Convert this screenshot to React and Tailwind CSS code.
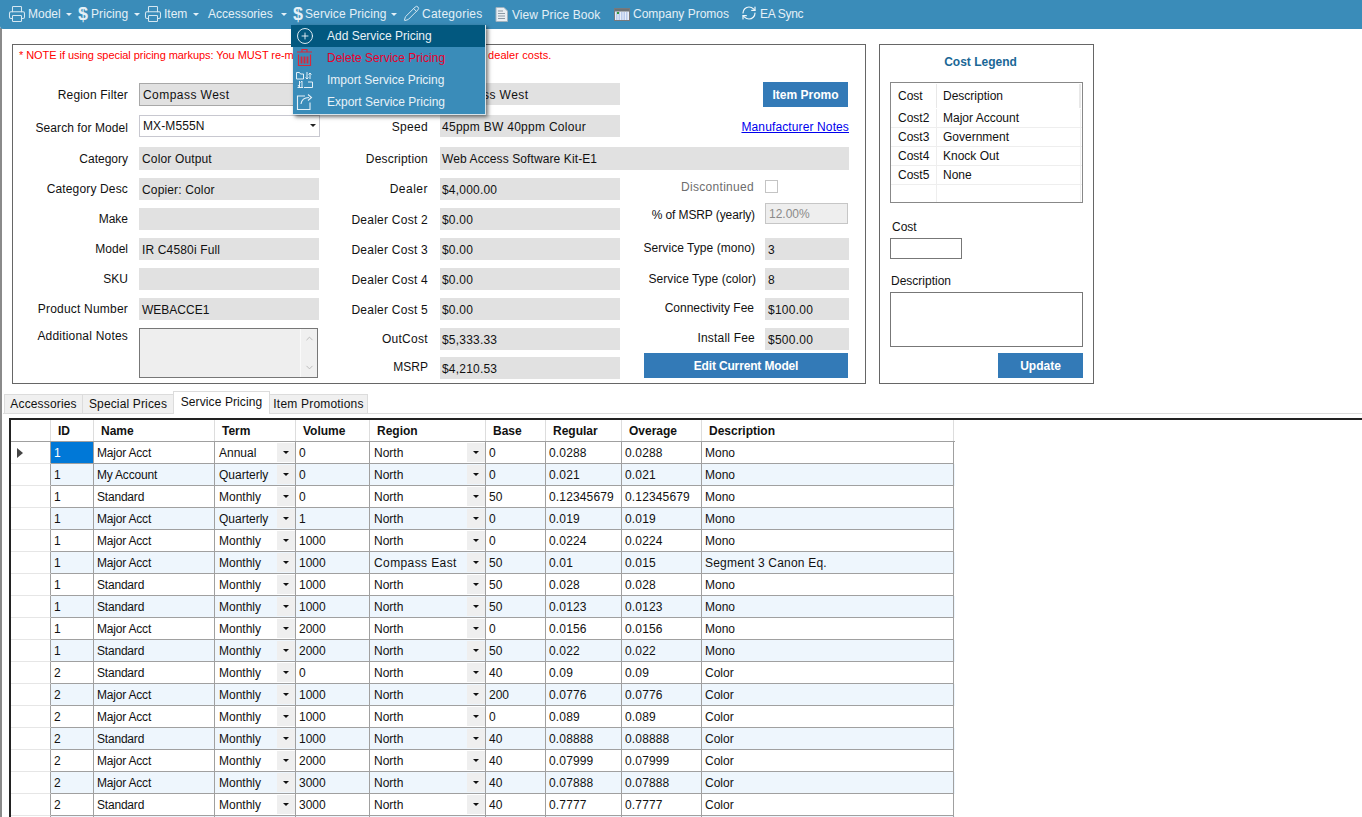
import React from "react";
import { Printer, Pencil, RefreshCw, CirclePlus, ChevronUp, ChevronDown } from "lucide-react";

const rows = [
  ["1","Major Acct","Annual","0","North","0","0.0288","0.0288","Mono"],
  ["1","My Account","Quarterly","0","North","0","0.021","0.021","Mono"],
  ["1","Standard","Monthly","0","North","50","0.12345679","0.12345679","Mono"],
  ["1","Major Acct","Quarterly","1","North","0","0.019","0.019","Mono"],
  ["1","Major Acct","Monthly","1000","North","0","0.0224","0.0224","Mono"],
  ["1","Major Acct","Monthly","1000","Compass East","50","0.01","0.015","Segment 3 Canon Eq."],
  ["1","Standard","Monthly","1000","North","50","0.028","0.028","Mono"],
  ["1","Standard","Monthly","1000","North","50","0.0123","0.0123","Mono"],
  ["1","Major Acct","Monthly","2000","North","0","0.0156","0.0156","Mono"],
  ["1","Standard","Monthly","2000","North","50","0.022","0.022","Mono"],
  ["2","Standard","Monthly","0","North","40","0.09","0.09","Color"],
  ["2","Major Acct","Monthly","1000","North","200","0.0776","0.0776","Color"],
  ["2","Major Acct","Monthly","1000","North","0","0.089","0.089","Color"],
  ["2","Standard","Monthly","1000","North","40","0.08888","0.08888","Color"],
  ["2","Major Acct","Monthly","2000","North","40","0.07999","0.07999","Color"],
  ["2","Major Acct","Monthly","3000","North","40","0.07888","0.07888","Color"],
  ["2","Standard","Monthly","3000","North","40","0.7777","0.7777","Color"],
  ["2","Major Acct","Monthly","3000","North","40","0.7777","0.7777","Color"],
];

const widths = ["w-[43px]","w-[121px]","w-[81px]","w-[74px]","w-[116px]","w-[60px]","w-[76px]","w-[80px]","w-[252px]"];
const tracks = ["","tracking-[-0.2px]","","","","","tracking-[0.15px]","tracking-[0.15px]",""];
const heads = ["ID","Name","Term","Volume","Region","Base","Regular","Overage","Description"];

const Caret = ({ className }) => (
  <span className={"absolute w-0 h-0 border-l-[3px] border-r-[3px] border-t-[3px] border-l-transparent border-r-transparent border-t-[#e4f0f7] " + className} />
);

const NavText = ({ className, children }) => (
  <span className={"absolute h-[16px] leading-[16px] text-[12px] text-[#e4f0f7] whitespace-nowrap " + className}>{children}</span>
);

const Dollar = ({ className }) => (
  <span className={"absolute top-[5px] h-[18px] leading-[18px] font-bold text-[18px] text-[#e4f0f7] " + className}>$</span>
);

const Field = ({ className, children }) => (
  <div className={"absolute flex items-center pt-[1px] bg-[#e1e1e1] text-[12px] whitespace-nowrap " + className}>{children}</div>
);

const Label = ({ className, children }) => (
  <div className={"absolute h-[16px] leading-[16px] text-right text-[12px] whitespace-nowrap " + className}>{children}</div>
);

const Btn = ({ className, children }) => (
  <div className={"absolute h-[25px] bg-[#337ab7] text-white font-bold text-[12px] flex items-center justify-center " + className}>{children}</div>
);

const DropCell = ({ text, width }) => (
  <div className={"relative h-full border-r border-[#a0a0a0] pl-[4px] flex items-center overflow-hidden shrink-0 " + width}>
    <span className={text.length > 9 ? "tracking-[0.4px]" : ""}>{text}</span>
    <span className="absolute right-0 top-[1px] bottom-[1px] w-[18px] bg-[#efefef] flex items-center justify-center">
      <span className="w-0 h-0 border-l-[3px] border-r-[3px] border-t-[3px] border-l-transparent border-r-transparent border-t-[#111]" />
    </span>
  </div>
);

export default function App() {
  return (
    <div className="relative w-[1362px] h-[817px] overflow-hidden bg-white [font-family:Liberation_Sans,Arial,sans-serif] text-[12px] text-[#111]">
      {/* window edge */}
      <div className="absolute left-0 top-[28px] w-[2px] h-[789px] bg-[#8a8a8a]" />

      {/* Top nav */}
      <div className="absolute left-0 top-0 w-[1362px] h-[29px] bg-[#3a8cb9] rounded-bl-[3px]">
        <Printer className="absolute left-[8px] top-[5px] text-[#d5e7f1]" size={18} strokeWidth={1.4} />
        <NavText className="left-[28px] top-[6px]">Model</NavText>
        <Caret className="left-[66px] top-[13px]" />
        <Dollar className="left-[78px]" />
        <NavText className="left-[91px] top-[6px] tracking-[0.1px]">Pricing</NavText>
        <Caret className="left-[134px] top-[13px]" />
        <Printer className="absolute left-[144px] top-[5px] text-[#d5e7f1]" size={18} strokeWidth={1.4} />
        <NavText className="left-[164px] top-[6px]">Item</NavText>
        <Caret className="left-[193px] top-[13px]" />
        <NavText className="left-[208px] top-[6px]">Accessories</NavText>
        <Caret className="left-[281px] top-[13px]" />
        <Dollar className="left-[293px]" />
        <NavText className="left-[305px] top-[6px] tracking-[0.1px]">Service Pricing</NavText>
        <Caret className="left-[391px] top-[13px]" />
        <Pencil className="absolute left-[403px] top-[5px] text-[#d5e7f1]" size={17} strokeWidth={1.4} />
        <NavText className="left-[422px] top-[6px] tracking-[0.25px]">Categories</NavText>
        <svg className="absolute left-[495px] top-[7px]" width="13" height="15" viewBox="0 0 13 15">
          <path d="M1 .5h8l3.500 3.500v10.500h-11.500z" fill="#e9eef2" stroke="#9fb2bf" />
          <path d="M3 4h5M3 6.500h7M3 9h7M3 11.500h7" stroke="#8b9aa5" />
        </svg>
        <NavText className="left-[512px] top-[7px] tracking-[0.08px]">View Price Book</NavText>
        <svg className="absolute left-[614px] top-[8px]" width="16" height="13" viewBox="0 0 16 13">
          <rect x=".5" y=".5" width="15" height="12" fill="#e8eef8" stroke="#77797c" />
          <rect x="1" y="1" width="14" height="2.500" fill="#6d7275" />
          <path d="M2 5h12M2 7h12M2 9h12M2 11h12" stroke="#8aa6dc" strokeDasharray="1.500 1" />
          <rect x="3" y="4" width="2" height="2" fill="#2e9a3c" />
        </svg>
        <NavText className="left-[633px] top-[6px]">Company Promos</NavText>
        <RefreshCw className="absolute left-[741px] top-[5px] text-[#eef6fa]" size={16} strokeWidth={1.8} />
        <NavText className="left-[760px] top-[6px] tracking-[-0.3px]">EA Sync</NavText>
      </div>

      {/* Main panel */}
      <div className="absolute left-[12px] top-[44px] w-[854px] h-[340px] border border-[#666]" />
      <div className="absolute left-[19px] top-[49px] text-[11px] leading-[13px] tracking-[-0.06px] text-[#f00] whitespace-nowrap">* NOTE if using special pricing markups: You MUST re-markup after changing</div>
      <div className="absolute left-[488px] top-[49px] text-[11px] leading-[13px] tracking-[0.08px] text-[#f00] whitespace-nowrap">dealer costs.</div>

      {/* left col */}
      <Label className="left-[20px] w-[108px] top-[87px] tracking-[0.17px]">Region Filter</Label>
      <div className="absolute left-[139px] top-[83px] w-[181px] h-[23px] bg-[#e1e1e1] border border-[#a8a8a8] flex items-center pl-[3px] text-[12px] tracking-[0.45px]">Compass West</div>
      <Label className="left-[20px] w-[108px] top-[120px] tracking-[0.07px]">Search for Model</Label>
      <div className="absolute left-[139px] top-[115px] w-[181px] h-[22px] bg-white border border-[#c8c8d0] flex items-center pl-[3px] pb-[1px] text-[12px] tracking-[0.1px]">MX-M555N
        <span className="absolute right-[3px] top-[8px] w-0 h-0 border-l-[3px] border-r-[3px] border-t-[3px] border-l-transparent border-r-transparent border-t-[#222]" />
      </div>
      <Label className="left-[20px] w-[108px] top-[151px]">Category</Label>
      <Field className="left-[139px] top-[147px] w-[181px] h-[23px] pl-[3px] tracking-[0.15px]">Color Output</Field>
      <Label className="left-[20px] w-[108px] top-[181px] tracking-[0.15px]">Category Desc</Label>
      <Field className="left-[139px] top-[178px] w-[180px] h-[22px] pl-[3px] tracking-[0.15px]">Copier: Color</Field>
      <Label className="left-[20px] w-[108px] top-[211px]">Make</Label>
      <Field className="left-[139px] top-[208px] w-[180px] h-[22px]" />
      <Label className="left-[20px] w-[108px] top-[241px]">Model</Label>
      <Field className="left-[139px] top-[238px] w-[180px] h-[22px] pl-[3px] tracking-[0.15px]">IR C4580i Full</Field>
      <Label className="left-[20px] w-[108px] top-[271px]">SKU</Label>
      <Field className="left-[139px] top-[268px] w-[180px] h-[22px]" />
      <Label className="left-[20px] w-[108px] top-[301px] tracking-[0.2px]">Product Number</Label>
      <Field className="left-[139px] top-[298px] w-[180px] h-[22px] pl-[3px]">WEBACCE1</Field>
      <Label className="left-[20px] w-[108px] top-[328px] tracking-[0.2px]">Additional Notes</Label>
      <div className="absolute left-[139px] top-[328px] w-[179px] h-[50px] bg-[#eeeeee] border border-[#777]">
        <div className="absolute right-0 top-0 bottom-0 w-[17px] bg-[#f0f0f0] flex flex-col items-center justify-between py-[4px] border-l border-[#fafafa]">
          <ChevronUp size={11} className="text-[#b8b8b8]" strokeWidth={2} />
          <ChevronDown size={11} className="text-[#b8b8b8]" strokeWidth={2} />
        </div>
      </div>

      {/* middle col */}
      <Field className="left-[440px] top-[83px] w-[180px] h-[22px] pl-[2px] tracking-[0.45px]">Compass West</Field>
      <Label className="left-[340px] w-[88px] top-[119px] tracking-[0.3px]">Speed</Label>
      <Field className="left-[440px] top-[115px] w-[180px] h-[22px] pl-[2px] tracking-[0.28px]">45ppm BW 40ppm Colour</Field>
      <Label className="left-[340px] w-[88px] top-[151px] tracking-[0.2px]">Description</Label>
      <Field className="left-[440px] top-[147px] w-[409px] h-[23px] pl-[2px] tracking-[0.1px]">Web Access Software Kit-E1</Field>
      <Label className="left-[340px] w-[88px] top-[181px] tracking-[0.5px]">Dealer</Label>
      <Field className="left-[440px] top-[178px] w-[180px] h-[22px] pl-[2px] tracking-[0.2px]">$4,000.00</Field>
      <Label className="left-[340px] w-[88px] top-[212px] tracking-[0.25px]">Dealer Cost 2</Label>
      <Field className="left-[440px] top-[208px] w-[180px] h-[22px] pl-[2px] tracking-[0.2px]">$0.00</Field>
      <Label className="left-[340px] w-[88px] top-[242px] tracking-[0.25px]">Dealer Cost 3</Label>
      <Field className="left-[440px] top-[238px] w-[180px] h-[22px] pl-[2px] tracking-[0.2px]">$0.00</Field>
      <Label className="left-[340px] w-[88px] top-[272px] tracking-[0.25px]">Dealer Cost 4</Label>
      <Field className="left-[440px] top-[268px] w-[180px] h-[22px] pl-[2px] tracking-[0.2px]">$0.00</Field>
      <Label className="left-[340px] w-[88px] top-[302px] tracking-[0.25px]">Dealer Cost 5</Label>
      <Field className="left-[440px] top-[298px] w-[180px] h-[22px] pl-[2px] tracking-[0.2px]">$0.00</Field>
      <Label className="left-[340px] w-[88px] top-[331px] tracking-[0.3px]">OutCost</Label>
      <Field className="left-[440px] top-[328px] w-[180px] h-[22px] pl-[2px] tracking-[0.2px]">$5,333.33</Field>
      <Label className="left-[340px] w-[88px] top-[359px]">MSRP</Label>
      <Field className="left-[440px] top-[357px] w-[180px] h-[22px] pl-[2px] tracking-[0.2px]">$4,210.53</Field>

      {/* right col */}
      <Btn className="left-[763px] top-[82px] w-[85px]">Item Promo</Btn>
      <a className="absolute right-[513px] top-[119px] h-[16px] leading-[16px] text-[12px] text-[#0000ee] underline whitespace-nowrap tracking-[0.12px]">Manufacturer Notes</a>
      <Label className="left-[630px] w-[124px] top-[179px] text-[#6d6d6d] tracking-[0.3px]">Discontinued</Label>
      <div className="absolute left-[765px] top-[180px] w-[13px] h-[13px] border border-[#c4c4c4] bg-white" />
      <Label className="left-[630px] w-[125px] top-[207px] tracking-[-0.1px]">% of MSRP (yearly)</Label>
      <div className="absolute left-[765px] top-[203px] w-[83px] h-[21px] bg-[#eeeeee] border border-[#c6c6c6] flex items-center pl-[3px] text-[12px] text-[#8a8a8a]">12.00%</div>
      <Label className="left-[630px] w-[125px] top-[240px] tracking-[0.05px]">Service Type (mono)</Label>
      <Field className="left-[765px] top-[238px] w-[84px] h-[22px] pl-[3px]">3</Field>
      <Label className="left-[630px] w-[126px] top-[271px] tracking-[0.05px]">Service Type (color)</Label>
      <Field className="left-[765px] top-[268px] w-[84px] h-[22px] pl-[3px]">8</Field>
      <Label className="left-[630px] w-[124px] top-[300px]">Connectivity Fee</Label>
      <Field className="left-[765px] top-[298px] w-[84px] h-[22px] pl-[3px] tracking-[0.25px]">$100.00</Field>
      <Label className="left-[630px] w-[125px] top-[330px] tracking-[0.2px]">Install Fee</Label>
      <Field className="left-[765px] top-[328px] w-[84px] h-[22px] pl-[3px] tracking-[0.25px]">$500.00</Field>
      <Btn className="left-[644px] top-[353px] w-[204px] tracking-[-0.15px]">Edit Current Model</Btn>

      {/* Legend */}
      <div className="absolute left-[879px] top-[44px] w-[215px] h-[340px] border border-[#666]" />
      <div className="absolute left-[880px] w-[201px] top-[54px] h-[16px] leading-[16px] text-center font-bold text-[12px] text-[#1a6796]">Cost Legend</div>
      <div className="absolute left-[890px] top-[82px] w-[193px] h-[121px] border border-[#888] bg-white flex flex-col text-[12px]">
        <div className="flex h-[24px] mt-[1px] mb-[1px]">
          <div className="w-[46px] pl-[7px] border-r border-[#e8e8e8] leading-[24px]">Cost</div>
          <div className="w-[144px] pl-[6px] border-r-2 border-[#e8e8e8] leading-[24px]">Description</div>
        </div>
        {[["Cost2","Major Account"],["Cost3","Government"],["Cost4","Knock Out"],["Cost5","None"],["",""]].map((r, i) => (
          <div key={i} className={"flex h-[19px]" + (i < 4 ? " border-b border-[#eeeeee]" : "")}>
            <div className="w-[46px] pl-[7px] border-r border-[#eeeeee] leading-[18px]">{r[0]}</div>
            <div className="w-[144px] pl-[6px] border-r border-[#eeeeee] leading-[18px]">{r[1]}</div>
          </div>
        ))}
      </div>
      <div className="absolute left-[892px] top-[219px] h-[16px] leading-[16px] text-[12px]">Cost</div>
      <div className="absolute left-[890px] top-[238px] w-[72px] h-[21px] border border-[#777] bg-white" />
      <div className="absolute left-[891px] top-[273px] h-[16px] leading-[16px] text-[12px]">Description</div>
      <div className="absolute left-[890px] top-[292px] w-[193px] h-[55px] border border-[#777] bg-white" />
      <Btn className="left-[998px] top-[353px] w-[85px]">Update</Btn>

      {/* Tabs */}
      <div className="absolute left-[3px] top-[413px] w-[1359px] h-[1px] bg-[#dcdcdc]" />
      <div className="absolute left-[4px] top-[394px] w-[79px] h-[20px] bg-[#f0f0f0] border border-[#dcdcdc] flex items-center justify-center text-[12px] tracking-[0.15px]">Accessories</div>
      <div className="absolute left-[83px] top-[394px] w-[91px] h-[20px] bg-[#f0f0f0] border border-[#dcdcdc] border-l-0 flex items-center justify-center text-[12px] tracking-[0.15px]">Special Prices</div>
      <div className="absolute left-[173px] top-[391px] w-[97px] h-[23px] bg-white border border-[#dcdcdc] border-b-0 flex items-center justify-center text-[12px] pb-[3px] tracking-[0.1px]">Service Pricing</div>
      <div className="absolute left-[270px] top-[394px] w-[98px] h-[20px] bg-[#f0f0f0] border border-[#dcdcdc] border-l-0 flex items-center justify-center text-[12px] tracking-[0.2px]">Item Promotions</div>

      {/* Grid */}
      <div className="absolute left-[9px] top-[418px] w-[1353px] h-[399px] border-l-2 border-t-2 border-[#222] overflow-hidden">
        <div className="flex h-[22px] w-[944px] border-b border-[#a0a0a0] font-bold text-[12px]">
          <div className="w-[40px] h-full border-r border-[#dddddd] shrink-0" />
          {heads.map((h, i) => (
            <div key={h} className={"h-full border-r border-[#dddddd] pl-[7px] flex items-center shrink-0 " + widths[i]}>{h}</div>
          ))}
        </div>
        {rows.map((r, ri) => (
          <div key={ri} className={"flex h-[22px] w-[944px] text-[12px] " + (ri % 2 === 1 ? "bg-[#eef6fd]" : "bg-white")}>
            <div className="relative w-[40px] h-full bg-white border-b border-r border-b-[#e6e6e6] border-r-[#a0a0a0] shrink-0">
              {ri === 0 && <span className="absolute left-[6px] top-[6px] w-0 h-0 border-t-[5px] border-b-[5px] border-l-[6px] border-t-transparent border-b-transparent border-l-[#444]" />}
            </div>
            <div className="flex h-full border-b border-[#a0a0a0]">
              {r.map((c, i) => {
                if (i === 2 || i === 4) return <DropCell key={i} text={c} width={widths[i]} />;
                const sel = ri === 0 && i === 0;
                return (
                  <div key={i} className={"h-full border-r border-[#a0a0a0] pl-[3px] flex items-center shrink-0 " + widths[i] + " " + tracks[i] + (c.length > 12 ? " tracking-[0.2px]" : "") + (sel ? " bg-[#0078d7] text-white" : "")}>{c}</div>
                );
              })}
            </div>
          </div>
        ))}
      </div>

      {/* Dropdown menu */}
      <div className="absolute left-[293px] top-[25px] w-[193px] h-[90px] bg-[#3a8cb9] shadow-[2px_2px_4px_rgba(0,0,0,0.55)] border-r border-b border-[#d8e4ea] text-[12px] text-[#e8f2f8]">
        <div className="relative h-[22px] -ml-[2px] bg-[#02587f] flex items-center pl-[36px]">
          <CirclePlus className="absolute left-[5px] top-[2px] text-[#eef6fa]" size={18} strokeWidth={1.2} />
          Add Service Pricing
        </div>
        <div className="relative h-[22px] flex items-center pl-[34px] text-[#e8002d]">
          <svg className="absolute left-[3px] top-[1px]" width="17" height="19" viewBox="0 0 17 19" fill="none" stroke="#d8283c" strokeWidth="1.200">
            <path d="M1 4h15M6 4V1.500h5V4" />
            <path d="M2.500 6.500V17.500h12V6.500" />
            <path d="M5.500 8.500v7M8.500 8.500v7M11.500 8.500v7" strokeWidth="1.800" />
          </svg>
          Delete Service Pricing
        </div>
        <div className="relative h-[22px] flex items-center pl-[34px]">
          <svg className="absolute left-[3px] top-[2px]" width="17" height="18" viewBox="0 0 17 18" fill="none" stroke="#e4f0f7" strokeWidth="1">
            <path d="M.5 8V1.500h3l1 1.500h3v5z" />
            <path d="M8 16.500h8.500V11H12M7 16.500H1.500" />
            <path d="M11 1v7M9.500 6.500L11 8l1.500-1.500M14 8V2M12.500 3.500L14 2l1.500 1.500" />
            <path d="M3.500 10v6M6 10v6M2 14l1.500 2M4.500 11.500L6 10" />
          </svg>
          Import Service Pricing
        </div>
        <div className="relative h-[22px] flex items-center pl-[34px]">
          <svg className="absolute left-[3px] top-[2px]" width="18" height="18" viewBox="0 0 18 18" fill="none" stroke="#e4f0f7" strokeWidth="1.100">
            <path d="M9 3H1.500v13.500H14V9.500" />
            <path d="M5 11c.5-4 3.500-6.500 8-6.500M12 1.500l3.500 3-3.500 3" />
          </svg>
          Export Service Pricing
        </div>
      </div>
    </div>
  );
}
